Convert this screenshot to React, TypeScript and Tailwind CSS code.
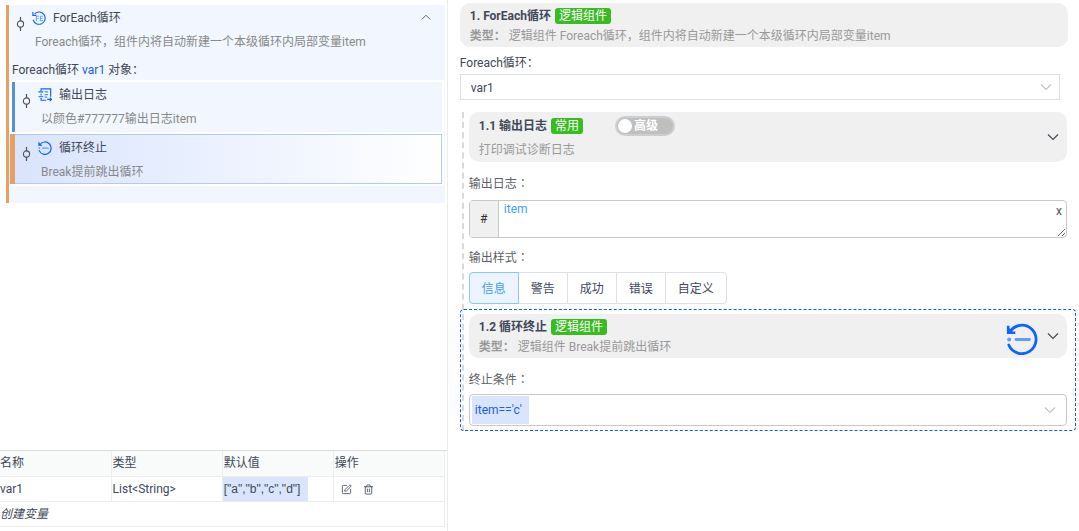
import { useState, type ReactNode } from "react";
import { SquarePen, Trash2 } from "lucide-react";
import clsx from "clsx";

const Chevron = ({ className }: { className?: string }) => (
  <svg viewBox="0 0 12 8" className={className} fill="none" stroke="currentColor" strokeWidth="1.2">
    <path d="M1 1.500l5 5 5-5" />
  </svg>
);

const StepNode = () => (
  <svg viewBox="0 0 9 16" className="mt-[11px] h-4 w-[9px] shrink-0" fill="none" stroke="#4a5060">
    <path d="M4.500 1v4M4.500 11v4" strokeWidth="1.2" />
    <circle cx="4.5" cy="8" r="3.1" strokeWidth="1.1" />
  </svg>
);

const LoopIcon = ({ className }: { className?: string }) => (
  <svg viewBox="0 0 32 32" className={className} fill="none" stroke="#0b66ff">
    <path d="M6 6.500A14 14 0 1 1 2.500 20" strokeWidth="2.6" />
    <path d="M2 2v8h8" strokeWidth="2.6" />
    <path d="M10 11v12M10 12h6M10 17h5M19 11v12M19 12h6M19 17h5M19 22h6" strokeWidth="1.8" stroke="#4b92ff" />
  </svg>
);

const LogIcon = ({ className }: { className?: string }) => (
  <svg viewBox="0 0 32 32" className={className} fill="none" stroke="#0b66ff" strokeWidth="2.6">
    <path d="M7 7V2h22v18M7 13v4M7 23v5h12" />
    <path d="M1 9h11M1 20h11M21 26h10M27 22l4 4-4 4" />
    <path d="M15 9h8M15 15h8M15 21h6" stroke="#4b92ff" />
  </svg>
);

const BreakIcon = ({ className }: { className?: string }) => (
  <svg viewBox="0 0 32 32" className={className} fill="none">
    <path d="M4 8.600A14.200 14.200 0 1 1 2.800 22" stroke="#0b66ff" strokeWidth="2.800" strokeLinecap="round" />
    <path d="M2.200 4V9.800H8" stroke="#0b66ff" strokeWidth="2.600" strokeLinecap="square" />
    <path d="M2 4l6 6H2z" fill="#0b66ff" />
    <circle cx="3.200" cy="16.500" r="2" fill="#5c9dff" />
    <path d="M10 16.500H23.500" stroke="#5c9dff" strokeWidth="2.800" strokeLinecap="round" />
  </svg>
);

type StepProps = {
  icon: ReactNode;
  title: string;
  desc: string;
  action?: ReactNode;
  className?: string;
};

const Step = ({ icon, title, desc, action, className }: StepProps) => (
  <div className={clsx("flex h-[50px] gap-[7px] pl-[7px]", className)}>
    <StepNode />
    <div className="min-w-0 flex-1">
      <div className="flex h-[25px] items-center gap-[7px]">
        {icon}
        <span className="flex-1 text-[#414857]">{title}</span>
        {action}
      </div>
      <p className="truncate pl-[3px] leading-6 text-[#888]">{desc}</p>
    </div>
  </div>
);

const Tag = ({ children }: { children: ReactNode }) => (
  <span className="rounded-[3px] bg-[#38bd21] px-1 font-normal leading-4 text-white">{children}</span>
);

const CardTitle = ({ title, tag }: { title: string; tag: string }) => (
  <div className="flex h-5 items-center gap-1 font-bold text-[#414857]">
    <span>{title}</span>
    <Tag>{tag}</Tag>
  </div>
);

const variables = [{ name: "var1", type: "List<String>", value: '["a","b","c","d"]' }];

const VariableTable = () => (
  <div className="border-t border-[#dcdcdc] pr-0.5 pb-1">
    <table className="w-full table-fixed border-collapse text-left text-[#414857]">
      <thead>
        <tr className="h-[26px] border-b border-[#ededed] bg-[#f9fbfa]">
          {["名称", "类型", "默认值", "操作"].map((name) => (
            <th key={name} className="border-r border-[#ededed] pl-px font-normal first:pl-0">{name}</th>
          ))}
        </tr>
      </thead>
      <tbody>
        {variables.map((v) => (
          <tr key={v.name} className="h-[25px] border-b border-[#ededed]">
            <td className="border-r border-[#ededed]">{v.name}</td>
            <td className="border-r border-[#ededed] pl-px">{v.type}</td>
            <td className="border-r border-[#ededed]">
              <input
                aria-label="默认值"
                defaultValue={v.value}
                className="block h-6 w-[85px] bg-[#d9e5fc] pl-px font-['Liberation_Sans',sans-serif] outline-none"
              />
            </td>
            <td className="border-r border-[#ededed] pl-[7px]">
              <div className="flex gap-[11px] text-[#505866]">
                <button aria-label="编辑"><SquarePen size={11} /></button>
                <button aria-label="删除"><Trash2 size={11} /></button>
              </div>
            </td>
          </tr>
        ))}
        <tr className="h-[25px] border-r border-b border-[#ededed]">
          <td colSpan={4}><button className="italic">创建变量</button></td>
        </tr>
      </tbody>
    </table>
  </div>
);

const FlowTree = () => (
  <aside className="flex w-[41.5%] shrink-0 flex-col border-r border-[#ebebeb]">
    <div className="flex-1 pt-[5px] pr-0.5 pl-1.5">
      <div className="border-l-3 border-[#e6a063] bg-[#f2f7ff] pb-[17px]">
        <Step
          icon={<LoopIcon className="size-[14px]" />}
          title="ForEach循环"
          desc="Foreach循环，组件内将自动新建一个本级循环内局部变量item"
          action={
            <button aria-label="收起" className="mr-[14px] text-[#606266]">
              <Chevron className="w-[10px] rotate-180" />
            </button>
          }
        />
        <p className="pt-[5px] pl-[3px] leading-5 text-[#414857]">
          Foreach循环 <span className="text-[#1a5cf0]">var1</span> 对象：
        </p>
        <div className="mr-px ml-px flex flex-col gap-0.5 bg-white py-0.5 pr-0.5">
          <Step
            icon={<LogIcon className="size-[14px]" />}
            title="输出日志"
            desc="以颜色#777777输出日志item"
            className="ml-0.5 border-l-3 border-[#4f93dc] bg-[#f2f7ff]"
          />
          <div className="flex">
            <div className="w-[5px] bg-[#e6a063]" />
            <Step
              icon={<BreakIcon className="size-[14px]" />}
              title="循环终止"
              desc="Break提前跳出循环"
              className="flex-1 border border-l-0 border-[#b3c9fa] bg-linear-to-r from-[#d9e4fd] to-white"
            />
          </div>
        </div>
      </div>
    </div>
    <VariableTable />
  </aside>
);

const levels = ["信息", "警告", "成功", "错误", "自定义"];

const LogCard = () => {
  const [level, setLevel] = useState("信息");

  return (
    <section className="pl-[5px]">
      <header className="flex h-[50px] items-center rounded-[10px] bg-[#f0f0f0] pr-2 pl-[10px]">
        <div className="flex-1 self-start pt-1">
          <div className="flex items-center gap-8">
            <CardTitle title="1.1 输出日志" tag="常用" />
            <label className="flex h-5 w-[60px] items-center gap-0.5 rounded-full border-2 border-[#cdced3] bg-[#bfbfbf] pl-px font-bold text-white">
              <input type="checkbox" className="size-[14px] appearance-none rounded-full bg-white" />
              高级
            </label>
          </div>
          <p className="pt-1 leading-5 text-[#999]">打印调试诊断日志</p>
        </div>
        <button aria-label="展开" className="text-[#444b59]"><Chevron className="w-3" /></button>
      </header>
      <label htmlFor="log" lang="zh-TW" className="block pt-3 leading-5 font-[Roboto,'Noto_Sans_CJK_TC',sans-serif] text-[#5c5f66]">
        输出日志：
      </label>
      <div className="relative mt-1.5 flex h-[38px] overflow-hidden rounded-[4px] border border-[#c8c8c8]">
        <button className="w-[29px] border-r border-[#c8c8c8] bg-[#f0f0f0] text-[#333]">#</button>
        <textarea
          id="log"
          defaultValue="item"
          className="h-full flex-1 resize-y px-[5px] leading-4 text-[#409eff] outline-none"
        />
        <button aria-label="清除" className="absolute top-0.5 right-1 leading-4 text-[#555]">x</button>
      </div>
      <p lang="zh-TW" className="pt-[10px] leading-5 font-[Roboto,'Noto_Sans_CJK_TC',sans-serif] text-[#5c5f66]">输出样式：</p>
      <div className="mt-1 flex -space-x-px">
        {levels.map((name) => (
          <button
            key={name}
            onClick={() => setLevel(name)}
            className={clsx(
              "h-8 border px-3 pt-0.5 first:rounded-l-[4px] last:rounded-r-[4px]",
              name === level
                ? "z-10 border-[#8cc5ff] bg-[#ecf5ff] text-[#409eff]"
                : "border-[#dcdfe6] text-[#414857]",
            )}
          >
            {name}
          </button>
        ))}
      </div>
    </section>
  );
};

const BreakCard = () => (
  <section className="mt-[5px] -mr-[9px] -ml-1 rounded-[4px] border border-dashed border-[#0b5cf0] pt-1 pr-2 pb-1 pl-2">
    <header className="flex h-11 items-center rounded-[10px] bg-[#f0f0f0] pr-2 pl-[10px]">
      <div className="flex-1 self-start pt-[3px]">
        <CardTitle title="1.2 循环终止" tag="逻辑组件" />
        <p className="leading-5 text-[#999]">
          <b>类型：</b> 逻辑组件 Break提前跳出循环
        </p>
      </div>
      <BreakIcon className="mt-1.5 mr-[9px] size-8" />
      <button aria-label="展开" className="text-[#444b59]"><Chevron className="w-3" /></button>
    </header>
    <label htmlFor="cond" lang="zh-TW" className="block pt-3 leading-5 font-[Roboto,'Noto_Sans_CJK_TC',sans-serif] text-[#5c5f66]">
      终止条件：
    </label>
    <div className="mt-1 flex h-8 items-center justify-between rounded-[4px] border border-[#c8c8c8] pr-[10px] pl-0.5">
      <input
        id="cond"
        defaultValue="item=='c'"
        className="h-7 w-[57px] bg-[#d9e5fc] pl-[3px] text-[#1a5cf0] outline-none"
      />
      <button aria-label="选择" className="text-[#c0c4cc]"><Chevron className="w-3" /></button>
    </div>
  </section>
);

export default function App() {
  return (
    <div className="flex min-h-screen bg-white font-[Roboto,'Noto_Sans_CJK_SC',sans-serif] text-xs" lang="zh-CN">
      <FlowTree />
      <main className="min-w-0 flex-1 pt-[3px] pr-[11px] pl-3">
        <header className="h-11 rounded-[10px] bg-[#f0f0f0] px-[10px] pt-[3px]">
          <CardTitle title="1. ForEach循环" tag="逻辑组件" />
          <p className="leading-5 text-[#999]">
            <b>类型：</b> 逻辑组件 Foreach循环，组件内将自动新建一个本级循环内局部变量item
          </p>
        </header>
        <label htmlFor="target" className="block pt-1.5 leading-5 text-[#414857]">
          Foreach循环：
        </label>
        <div className="relative mt-px mr-2">
          <select
            id="target"
            className="block h-[26px] w-full appearance-none border border-[#dcdfe6] bg-white pt-px pl-[10px] text-[#414857]"
          >
            <option>var1</option>
          </select>
          <Chevron className="pointer-events-none absolute top-[9px] right-2 w-3 text-[#c0c4cc]" />
        </div>
        <div className="mt-3 mr-px ml-0.5 border-l-2 border-dashed border-[#d9d9d9]">
          <LogCard />
          <BreakCard />
        </div>
      </main>
    </div>
  );
}
